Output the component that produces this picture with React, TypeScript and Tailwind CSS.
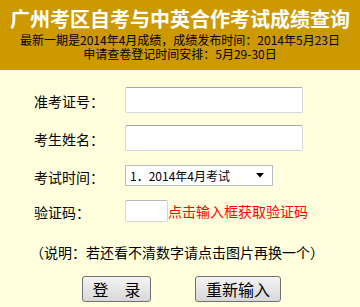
export default function App() {
    const font = { fontFamily: '"Noto Sans CJK SC", "Noto Sans", sans-serif' };

    return (
        <div className="w-[360px] h-[307px] bg-[#ffffdd] text-black overflow-hidden" style={font}>
            <div className="h-[70px] bg-[#cc9900] pt-[7px] text-center">
                <div className="text-[20px] leading-[24px] font-bold text-white">广州考区自考与中英合作考试成绩查询</div>
                <div className="mt-[2px] text-[12px] leading-[14px]">最新一期是2014年4月成绩，成绩发布时间：2014年5月23日</div>
                <div className="text-[12px] leading-[14px]">申请查卷登记时间安排：5月29-30日</div>
            </div>

            <div className="pl-[34px] pt-[17px] text-[14px]">
                <div className="flex items-center h-[26px]">
                    <span className="w-[91px] pt-[3px]">准考证号：</span>
                    <div className="w-[178px] h-[26px] bg-white border border-[#d2d6de] border-t-[#a8a8a8] rounded-[2px]" />
                </div>
                <div className="flex items-center h-[26px] mt-[12px]">
                    <span className="w-[91px] pt-[3px]">考生姓名：</span>
                    <div className="w-[178px] h-[26px] bg-white border border-[#d2d6de] border-t-[#a8a8a8] rounded-[2px]" />
                </div>
                <div className="flex items-center h-[21px] mt-[14px]">
                    <span className="w-[91px] pt-[3px]">考试时间：</span>
                    <div className="w-[148px] h-[21px] bg-white border border-[#b8bcc4] flex items-center pl-[4px] pr-[8px]">
                        <span className="text-[12px] leading-[14px] flex-1">1．2014年4月考试</span>
                        <svg width="8" height="5" viewBox="0 0 8 5"><path d="M0 0H8L4 4.5Z" fill="#000" /></svg>
                    </div>
                </div>
                <div className="flex items-center h-[22px] mt-[14px]">
                    <span className="w-[91px] pt-[3px]">验证码：</span>
                    <div className="w-[43px] h-[22px] bg-white border border-[#d2d6de] border-t-[#b8b8b8] rounded-[2px]" />
                    <span className="text-[#ff0000] pt-[1px]">点击输入框获取验证码</span>
                </div>
            </div>

            <div className="text-[14px] leading-[18px] mt-[21px] pl-[30px]">（说明：若还看不清数字请点击图片再换一个）</div>

            <div className="flex mt-[15px] pl-[82px] gap-[44px]">
                <button className="w-[69px] h-[26px] border border-[#707070] rounded-[3px] bg-gradient-to-b from-[#f4f4f4] to-[#d8d8d8] text-[16px] leading-[20px]">登　录</button>
                <button className="w-[86px] h-[26px] border border-[#707070] rounded-[3px] bg-gradient-to-b from-[#f4f4f4] to-[#d8d8d8] text-[16px] leading-[20px]">重新输入</button>
            </div>
        </div>
    );
}
